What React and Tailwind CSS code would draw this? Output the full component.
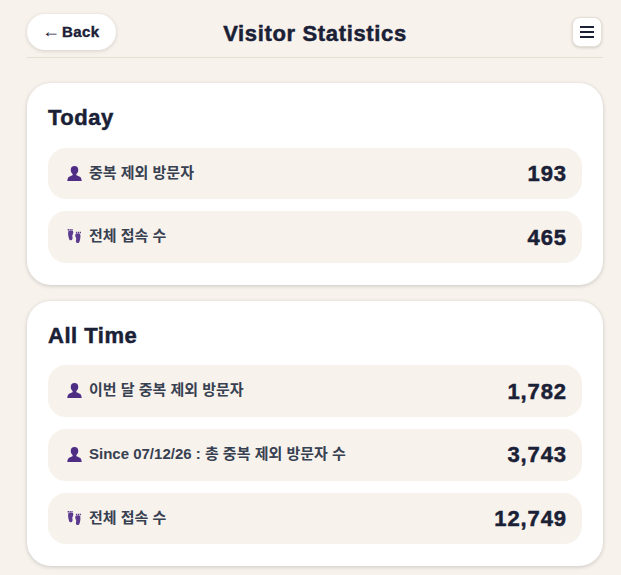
function PersonIcon() {
  return (
    <svg className="w-[15px] h-[15px] shrink-0" viewBox="0 0 16 16" fill="#4f2d85">
      <path d="M8 0c2.600 0 4 1.700 4 4.200 0 1.800-.8 3.300-2 4.200v1.100c0 .6 2.900 1.100 4.200 2.200.8.700 1.300 2.200 1.500 4.300H.3c.2-2.100.7-3.600 1.500-4.300C3.100 10.600 6 10.100 6 9.500V8.400C4.800 7.500 4 6 4 4.200 4 1.700 5.400 0 8 0z" />
    </svg>
  );
}

function FeetIcon() {
  return (
    <svg className="w-[15px] h-[15px] shrink-0" viewBox="0 0 16 16" fill="#5b3a8f">
      <path d="M.7 0h1.500v1.500H.7zM2.800 0h1.300v1.500H2.800zM4.700 0h1.300v1.500H4.700zM1.500 2.200c1.500-.4 3.600-.4 4.900 0 .6 1.600.2 3-.5 4.200-.4.700-.2 1.500 0 2.500.3 1.600-.3 3.100-1.700 3.100-1.300 0-2-1-2.300-2.500C1.500 7.600.7 5.400 1.500 2.200z" />
      <path d="M9.500 3h1.300v1.500H9.500zM11.500 3h1.300v1.500h-1.300zM13.400 3h1.500v1.500h-1.500zM9.100 5.200c1.300-.4 3.400-.4 4.900 0 .8 3.200 0 5.400-.4 7.300-.3 1.500-1 2.500-2.300 2.500-1.400 0-2-1.500-1.700-3.100.2-1 .4-1.800 0-2.500-.7-1.200-1.100-2.600-.5-4.200z" />
    </svg>
  );
}

function StatRow({ icon, label, value }) {
  return (
    <div className="flex items-center justify-between h-[51.7px] pl-[19px] pr-[15px] rounded-[18px] bg-[#f7f2ec]">
      <div className="flex items-center gap-[7px] -mt-[1px]">
        {icon}
        <span className="text-[15px] font-bold text-[#374151]">{label}</span>
      </div>
      <span className="text-[22px] font-black tracking-[0.9px] text-[#1a2035] [-webkit-text-stroke:0.5px_#1a2035]">{value}</span>
    </div>
  );
}

function StatCard({ title, rows }) {
  return (
    <section className="bg-white rounded-[24px] px-[21px] pt-[20px] pb-[21.500px] shadow-[0_1px_4px_rgba(0,0,0,0.18)]">
      <h2 className="text-[22px] leading-[30px] mb-[14.400px] font-black tracking-[0.5px] text-[#1a2035] [-webkit-text-stroke:0.5px_#1a2035]">{title}</h2>
      <div className="flex flex-col gap-[12px]">
        {rows.map((row) => (
          <StatRow key={row.label + row.value} {...row} />
        ))}
      </div>
    </section>
  );
}

export default function App() {
  return (
    <div className="min-h-[575px] overflow-hidden bg-[#f7f2ec] pl-[27px] pr-[18px] pt-[14px] font-['Liberation_Sans','Noto_Sans_CJK_KR',sans-serif]">
      <header className="grid grid-cols-[1fr_auto_1fr] items-center h-[44px] border-b border-[#e6dfd3]">
        <button className="flex items-center gap-[2px] h-[36px] -mt-[7px] w-[89px] pl-[15px] rounded-full bg-white text-[15px] font-black tracking-[0.45px] text-[#1a2035] [-webkit-text-stroke:0.4px_#1a2035] shadow-[0_1px_4px_rgba(0,0,0,0.15)]">
          <span className="text-[18px] leading-none font-normal tracking-normal [-webkit-text-stroke:0px] -mt-[2px]">←</span>
          <span>Back</span>
        </button>
        <h1 className="text-[22px] font-black tracking-[0.65px] -mt-[5px] text-[#1a2035] [-webkit-text-stroke:0.5px_#1a2035]">Visitor Statistics</h1>
        <button className="justify-self-end flex items-center justify-center w-[30px] h-[30px] -mt-[7px] mr-[1px] rounded-[8px] bg-white border border-[#e6dfd3] shadow-[0_1px_3px_rgba(0,0,0,0.15)]">
          <svg className="w-[14px] h-[12px]" viewBox="0 0 14 12" fill="#1a2035">
            <rect y="0" width="14" height="2" />
            <rect y="5" width="14" height="2" />
            <rect y="10" width="14" height="2" />
          </svg>
        </button>
      </header>
      <main className="flex flex-col gap-[16.400px] mt-[25.300px]">
        <StatCard
          title="Today"
          rows={[
            { icon: <PersonIcon />, label: "중복 제외 방문자", value: "193" },
            { icon: <FeetIcon />, label: "전체 접속 수", value: "465" },
          ]}
        />
        <StatCard
          title="All Time"
          rows={[
            { icon: <PersonIcon />, label: "이번 달 중복 제외 방문자", value: "1,782" },
            { icon: <PersonIcon />, label: "Since 07/12/26 : 총 중복 제외 방문자 수", value: "3,743" },
            { icon: <FeetIcon />, label: "전체 접속 수", value: "12,749" },
          ]}
        />
      </main>
    </div>
  );
}
